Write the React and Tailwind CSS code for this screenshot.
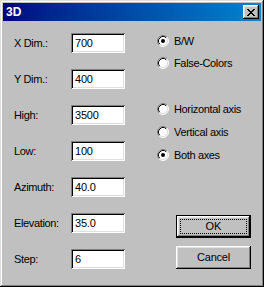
import React from "react";

const font = "font-['Liberation_Sans',Arial,sans-serif]";

function Radio({ checked, label }) {
  return (
    <div className="flex items-center h-[16px]">
      <svg width="12" height="12" viewBox="0 0 12 12" className="shrink-0">
        <circle cx="6" cy="6" r="5" fill="#fff" />
        <path d="M2.11 9.89 A5.5 5.5 0 0 1 9.89 2.11" fill="none" stroke="#808080" strokeWidth="1" />
        <path d="M9.89 2.11 A5.5 5.5 0 0 1 2.11 9.89" fill="none" stroke="#fff" strokeWidth="1" />
        <path d="M2.82 9.18 A4.5 4.5 0 0 1 9.18 2.82" fill="none" stroke="#000" strokeWidth="1" />
        <path d="M9.18 2.82 A4.5 4.5 0 0 1 2.82 9.18" fill="none" stroke="#dfdfdf" strokeWidth="1" />
        {checked && <circle cx="6" cy="6" r="2" fill="#000" />}
      </svg>
      <span className="ml-[5px] text-[11px] tracking-[-0.35px] text-black leading-none">{label}</span>
    </div>
  );
}

function Field({ label, value }) {
  return (
    <div className="flex items-center h-[20px]">
      <span className="w-[57px] text-[11px] tracking-[-0.35px] text-black leading-none">{label}</span>
      <div className="w-[54px] h-[20px] bg-white flex items-center pl-[4px] text-[11px] tracking-[-0.2px] text-black leading-none shadow-[inset_1px_1px_#808080,inset_-1px_-1px_#fff,inset_2px_2px_#000,inset_-2px_-2px_#dfdfdf]">
        {value}
      </div>
    </div>
  );
}

export default function App() {
  const fields = [
    ["X Dim.:", "700"],
    ["Y Dim.:", "400"],
    ["High:", "3500"],
    ["Low:", "100"],
    ["Azimuth:", "40.0"],
    ["Elevation:", "35.0"],
    ["Step:", "6"],
  ];
  return (
    <div className={`${font} w-[264px] h-[287px] bg-[#c0c0c0] p-[3px] flex flex-col shadow-[inset_-1px_-1px_#000,inset_1px_1px_#dfdfdf,inset_-2px_-2px_#808080,inset_2px_2px_#fff]`}>
      <div className="h-[18px] flex items-center justify-between bg-gradient-to-r from-[#000080] to-[#1084d0] pl-[3px] pr-[2px]">
        <span className="text-white font-bold text-[12px] leading-none">3D</span>
        <div className="w-[16px] h-[14px] bg-[#c0c0c0] flex items-center justify-center shadow-[inset_-1px_-1px_#000,inset_1px_1px_#fff,inset_-2px_-2px_#808080,inset_2px_2px_#dfdfdf]">
          <svg width="8" height="7" viewBox="0 0 8 7" shapeRendering="crispEdges">
            <path
              fill="#000"
              d="M0 0h2v1h-2zM6 0h2v1h-2zM1 1h2v1h-2zM5 1h2v1h-2zM2 2h4v1h-4zM3 3h2v1h-2zM2 4h4v1h-4zM1 5h2v1h-2zM5 5h2v1h-2zM0 6h2v1h-2zM6 6h2v1h-2z"
            />
          </svg>
        </div>
      </div>
      <div className="flex pt-[12px] pl-[11px]">
        <div className="flex flex-col gap-[16px] w-[111px]">
          {fields.map(([l, v]) => (
            <Field key={l} label={l} value={v} />
          ))}
        </div>
        <div className="flex flex-col ml-[32px]">
          <div className="flex flex-col gap-[6px]">
            <Radio checked label="B/W" />
            <Radio label="False-Colors" />
          </div>
          <div className="flex flex-col gap-[7px] mt-[30px]">
            <Radio label="Horizontal axis" />
            <Radio label="Vertical axis" />
            <Radio checked label="Both axes" />
          </div>
          <div className="flex flex-col ml-[19px] mt-[52px] gap-[8px]">
            <div className="w-[75px] h-[23px] bg-[#c0c0c0] border border-black flex items-center justify-center relative shadow-[inset_-1px_-1px_#000,inset_1px_1px_#fff,inset_-2px_-2px_#808080,inset_2px_2px_#dfdfdf]">
              <div className="absolute inset-[3px] border border-dotted border-black" />
              <span className="text-[11px] text-black leading-none">OK</span>
            </div>
            <div className="w-[75px] h-[23px] bg-[#c0c0c0] flex items-center justify-center shadow-[inset_-1px_-1px_#000,inset_1px_1px_#fff,inset_-2px_-2px_#808080,inset_2px_2px_#dfdfdf]">
              <span className="text-[11px] tracking-[-0.2px] text-black leading-none">Cancel</span>
            </div>
          </div>
        </div>
      </div>
    </div>
  );
}
